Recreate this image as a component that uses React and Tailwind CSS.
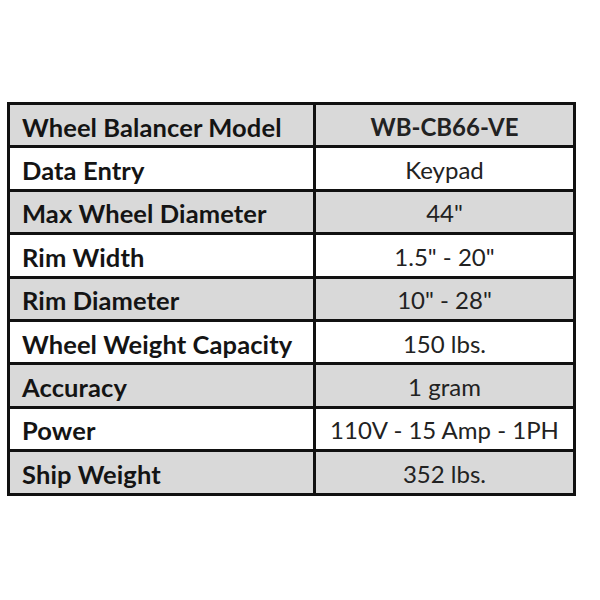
const rows = [
  ["Wheel Balancer Model", "WB-CB66-VE"],
  ["Data Entry", "Keypad"],
  ["Max Wheel Diameter", "44\""],
  ["Rim Width", "1.5\" - 20\""],
  ["Rim Diameter", "10\" - 28\""],
  ["Wheel Weight Capacity", "150 lbs."],
  ["Accuracy", "1 gram"],
  ["Power", "110V - 15 Amp - 1PH"],
  ["Ship Weight", "352 lbs."],
];

export default function App() {
  return (
    <div className="w-[600px] h-[600px] bg-white pt-[102px] pl-[7px]" style={{ fontFamily: "Lato, 'Open Sans', sans-serif" }}>
      <div className="w-[569px] grid grid-cols-[303px_257px] auto-rows-[40.4px] gap-[3px] p-[3px] bg-[#111]">
        {rows.map(([label, value], i) => {
          const bg = i % 2 === 0 ? "bg-[#d9d9d9]" : "bg-white";
          return [
            <div key={label} className={`${bg} flex items-center pl-[12px] pt-[3px] text-[25.5px] tracking-[0.1px] font-bold text-[#141414]`}>
              {label}
            </div>,
            <div
              key={label + "-v"}
              className={`${bg} flex items-center justify-center pt-[3px] text-[24px] text-[#222] ${i === 0 ? "font-bold" : ""}`}
            >
              {value}
            </div>,
          ];
        })}
      </div>
    </div>
  );
}
